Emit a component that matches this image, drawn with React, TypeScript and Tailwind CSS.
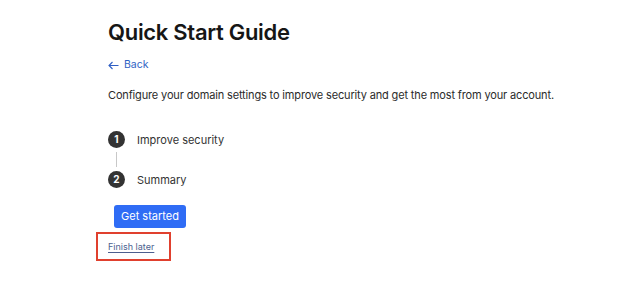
export default function App() {
  return (
    <div className="h-[300px] w-[640px] bg-white font-['Inter',sans-serif] text-[#1d1d1f]">
      <div className="flex flex-col pl-[108px] pt-[18px]">
        <h1 className="text-[22px] font-semibold leading-[28px] tracking-[-0.3px] text-[#161616]">
          Quick Start Guide
        </h1>
        <a href="#" className="mt-[11px] flex items-center gap-[5px] text-[10.5px] leading-[16px] text-[#2f5fc4]">
          <svg width="11" height="9" viewBox="0 0 11 9" fill="none" stroke="currentColor" strokeWidth="1.1">
            <path d="M10.5 4.5H1M4.5 1L1 4.5L4.5 8" />
          </svg>
          Back
        </a>
        <p className="mt-[14px] text-[11px] leading-[16px] tracking-[-0.15px] text-[#2b2b2b]">
          Configure your domain settings to improve security and get the most from your account.
        </p>

        <div className="mt-[28px] flex flex-col">
          <div className="flex h-[17px] items-center gap-[12px]">
            <span className="flex h-[17px] w-[17px] items-center justify-center rounded-full bg-[#333] text-[10px] font-bold text-white">
              1
            </span>
            <span className="text-[11px] leading-[16px] text-[#333]">Improve security</span>
          </div>
          <div className="flex h-[23px] items-center">
            <div className="ml-[8px] h-[15px] w-px bg-[#c8c8c8]" />
          </div>
          <div className="flex h-[17px] items-center gap-[12px]">
            <span className="flex h-[17px] w-[17px] items-center justify-center rounded-full bg-[#333] text-[10px] font-bold text-white">
              2
            </span>
            <span className="text-[11px] leading-[16px] text-[#333]">Summary</span>
          </div>
        </div>

        <button className="ml-[6px] mt-[17px] h-[23px] w-[72px] rounded-[3px] bg-[#2f6cf5] text-[11px] text-white">
          Get started
        </button>

        <div className="-ml-[12px] mt-[4px] flex h-[29px] w-[75px] items-center border-2 border-[#e0402e] pl-[10px]">
          <a href="#" className="text-[9px] leading-[12px] text-[#4c5f8f] underline underline-offset-2 decoration-[#4c5f8f]">
            Finish later
          </a>
        </div>
      </div>
    </div>
  );
}
